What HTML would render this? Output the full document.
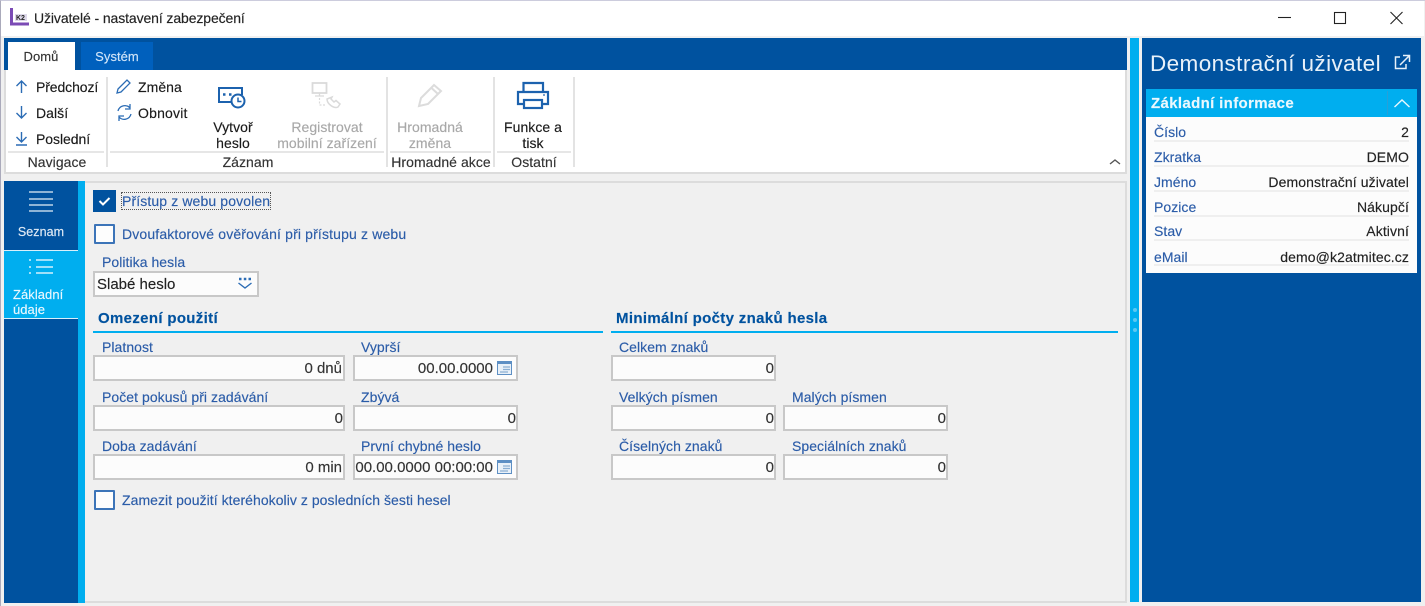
<!DOCTYPE html>
<html lang="cs"><head><meta charset="utf-8"><title>Uživatelé - nastavení zabezpečení</title>
<style>
html,body{margin:0;padding:0}
body{width:1425px;height:606px;overflow:hidden;position:relative;background:#f0f0f0;font-family:"Liberation Sans",sans-serif;font-size:14px;color:#1a1a1a;filter:blur(.3px)}
div,svg{position:absolute;box-sizing:border-box}
.t{white-space:nowrap;line-height:16px;letter-spacing:.05px;-webkit-text-stroke:.15px}
.c{text-align:center;transform:translateX(-50%)}
.l{color:#2b5ca8}
.g{color:#a8a8a8}
.i{background:#fcfcfc;border:2px solid #c8c8c8;height:26px;text-align:right;padding-right:0;font-size:15px;line-height:24px;white-space:nowrap;color:#333;-webkit-text-stroke:.15px}
.h{font-weight:bold;color:#00529f;letter-spacing:.33px;font-size:15px}
.r{left:1154px;width:255px;height:2px;background:#efefef}
.v{right:16px;color:#222;letter-spacing:.1px}
.sep{width:2px;background:#e3e3e3}
.cb{width:21px;height:20px;border:2px solid #3c74b8;background:#fdfdfd;border-radius:1px}
</style></head><body>
<div style="left:0;top:0;width:1425px;height:606px;background:#f0f0f0;border-left:1px solid #aab;border-top:1px solid #ccd"></div>
<div style="left:1px;top:1px;width:1423px;height:35px;background:#fff"></div>
<svg style="left:9px;top:7px" width="21" height="20" viewBox="0 0 21 20"><path d="M2.500 1V17H20" fill="none" stroke="#7b4bb5" stroke-width="3"/><rect x="6" y="7" width="12" height="7" fill="#ded9ea"/><text x="7" y="13" font-family="Liberation Sans" font-size="7" font-weight="bold" fill="#222">K2</text></svg>
<div class="t" style="left:34px;top:10px;color:#222;letter-spacing:-.1px">Uživatelé - nastavení zabezpečení</div>
<svg style="left:1270px;top:5px" width="145" height="26" viewBox="0 0 145 26" fill="none" stroke="#222" stroke-width="1.100"><path d="M8 12.500H21"/><rect x="64.500" y="7.500" width="11" height="11"/><path d="M120.500 7L132.500 19M132.500 7L120.500 19"/></svg>

<div style="left:4px;top:38px;width:1123px;height:32px;background:#00529f"></div>
<div style="left:8px;top:42px;width:67px;height:28px;background:#fff"></div>
<div style="left:81px;top:42px;width:72px;height:28px;background:#0060bd"></div>
<div class="t c" style="left:41px;top:49px;font-size:13px;color:#333">Domů</div>
<div class="t c" style="left:117px;top:49px;font-size:13px;color:#cfe4f8">Systém</div>
<div style="left:4px;top:70px;width:1123px;height:104px;background:#fff;border:solid #dcdcdc;border-width:0 2px 2px 2px"></div>

<svg style="left:14px;top:78px" width="18" height="72" viewBox="0 0 18 72" fill="none" stroke="#2b6cb5" stroke-width="1.400"><path d="M7.500 15V3M2.500 8L7.500 3L12.500 8"/><path d="M7.500 28V40M2.500 35L7.500 40L12.500 35"/><path d="M7.500 54V64M2.500 59L7.500 64L12.500 59M2 67H13"/></svg>
<div class="t" style="left:36px;top:79px;letter-spacing:-.1px">Předchozí</div>
<div class="t" style="left:36px;top:105px">Další</div>
<div class="t" style="left:36px;top:131px;letter-spacing:-.05px">Poslední</div>
<div class="sep" style="left:106px;top:77px;height:90px"></div>
<svg style="left:115px;top:78px" width="20" height="44" viewBox="0 0 20 44" fill="none" stroke="#2b6cb5" stroke-width="1.300"><path d="M2 15L3 11L12 2L15 5L6 14Z"/><path d="M3 33A7 7 0 0 1 15 30M15 26V31H10M16 36A7 7 0 0 1 4 39M4 43V38H9"/></svg>
<div class="t" style="left:138px;top:79px">Změna</div>
<div class="t" style="left:138px;top:105px;letter-spacing:.2px">Obnovit</div>
<svg style="left:217px;top:84px" width="30" height="26" viewBox="0 0 30 26" fill="none" stroke="#1c62ae" stroke-width="2"><path d="M14 18H2V4H25V11"/><circle cx="21" cy="17" r="6.500" fill="#fff"/><path d="M21 13.500V17.500H24.500" stroke-width="1.500"/><path d="M6 10.500h2.500M12 10.500h2.500" stroke-width="2.500"/></svg>
<div class="t c" style="left:233px;top:119px">Vytvoř</div>
<div class="t c" style="left:233px;top:135px">heslo</div>
<svg style="left:311px;top:81px" width="32" height="29" viewBox="0 0 32 29" fill="none" stroke="#dadada" stroke-width="1.800"><rect x="1.500" y="2" width="14" height="10"/><path d="M8.500 12V15M4 15H13" stroke-width="1.300"/><path d="M8.500 17V24H15" stroke-width="1.200" stroke-dasharray="2 1.500"/><path d="M16 18C16 23 23 28 27 26L29 23L25 19.500L23 21L20 18L21 16Z" stroke-width="1.500"/></svg>
<div class="t c g" style="left:327px;top:119px">Registrovat</div>
<div class="t c g" style="left:327px;top:135px">mobilní zařízení</div>
<div class="sep" style="left:386px;top:77px;height:90px"></div>
<svg style="left:417px;top:83px" width="26" height="26" viewBox="0 0 26 26" fill="none" stroke="#dcdcdc" stroke-width="2"><path d="M2 23L4 15L17 2L24 8L11 21Z"/><path d="M14.500 5L21 11"/></svg>
<div class="t c g" style="left:430px;top:119px">Hromadná</div>
<div class="t c g" style="left:430px;top:135px">změna</div>
<div class="sep" style="left:493px;top:77px;height:90px"></div>
<svg style="left:516px;top:81px" width="34" height="29" viewBox="0 0 34 29" fill="none" stroke="#1c62ae" stroke-width="2.200"><path d="M7.500 11V2H27V11"/><path d="M8 23H2V11H32V23H26"/><rect x="8" y="19" width="18" height="8"/><path d="M27 14h2" stroke-width="1.200"/></svg>
<div class="t c" style="left:533px;top:119px">Funkce a</div>
<div class="t c" style="left:533px;top:135px">tisk</div>
<div class="sep" style="left:573px;top:77px;height:90px"></div>
<div style="left:8px;top:151px;width:96px;height:2px;background:#e6e6e6"></div>
<div style="left:110px;top:151px;width:274px;height:2px;background:#e6e6e6"></div>
<div style="left:390px;top:151px;width:101px;height:2px;background:#e6e6e6"></div>
<div style="left:497px;top:151px;width:74px;height:2px;background:#e6e6e6"></div>
<div class="t c" style="left:57px;top:154px;color:#333">Navigace</div>
<div class="t c" style="left:248px;top:154px;color:#333">Záznam</div>
<div class="t c" style="left:441px;top:154px;color:#333">Hromadné akce</div>
<div class="t c" style="left:534px;top:154px;color:#333">Ostatní</div>
<svg style="left:1108px;top:157px" width="14" height="10" viewBox="0 0 14 10" fill="none" stroke="#555" stroke-width="1.400"><path d="M2 7L7 3L12 7"/></svg>

<div style="left:4px;top:181px;width:74px;height:422px;background:#00529f"></div>
<div style="left:4px;top:250px;width:74px;height:69px;background:#00aeef;border-top:1px solid #d8f0fb;border-bottom:1px solid #d8f0fb"></div>
<div style="left:78px;top:181px;width:7px;height:422px;background:#00aeef"></div>
<svg style="left:28px;top:190px" width="26" height="22" viewBox="0 0 26 22" stroke="#e4eef8" stroke-width="1.300"><path d="M1 2H25M1 9H25M1 15H25M1 21H25"/></svg>
<div class="t c" style="left:41px;top:224px;color:#dfeaf5;font-size:12.500px">Seznam</div>
<svg style="left:28px;top:258px" width="26" height="18" viewBox="0 0 26 18" stroke="#fff" stroke-width="1.300"><path d="M1 2H3M8 2H25M1 9H3M8 9H25M1 15H3M8 15H25"/></svg>
<div class="t" style="left:13px;top:287px;color:#e8f7fe;font-size:13px">Základní</div>
<div class="t" style="left:13px;top:302px;color:#e8f7fe;font-size:13px">údaje</div>

<div style="left:85px;top:181px;width:1042px;height:422px;background:#f0f0f0;border:solid #dcdcdc;border-width:2px 2px 2px 0"></div>

<div style="left:93px;top:190px;width:23px;height:22px;background:#00529f"></div>
<svg style="left:93px;top:190px" width="23" height="22" viewBox="0 0 23 22" fill="none" stroke="#fff" stroke-width="2"><path d="M6.500 11L10 14.500L16.500 8"/></svg>
<div class="t l" style="left:122px;top:193px;border:1px dotted #555;margin:-1px;letter-spacing:.12px">Přístup z webu povolen</div>
<div class="cb" style="left:94px;top:224px"></div>
<div class="t l" style="left:122px;top:226px;letter-spacing:.15px">Dvoufaktorové ověřování při přístupu z webu</div>
<div class="t l" style="left:102px;top:254px">Politika hesla</div>
<div class="i" style="left:93px;top:271px;width:166px;text-align:left;padding-left:2px;color:#222">Slabé heslo</div>
<svg style="left:237px;top:277px" width="16" height="13" viewBox="0 0 16 13" fill="none" stroke="#2b6cb5" stroke-width="1.400"><path d="M1.500 6L8 11L14.500 6"/><path d="M2 2h2.500M6.800 2h2.500M11.500 2h2.500" stroke-width="2.400"/></svg>

<div class="t h" style="left:98px;top:311px">Omezení použití</div>
<div class="t h" style="left:616px;top:311px">Minimální počty znaků hesla</div>
<div style="left:93px;top:331px;width:510px;height:2px;background:#00aeef"></div>
<div style="left:611px;top:331px;width:507px;height:2px;background:#00aeef"></div>

<div class="t l" style="left:102px;top:339px">Platnost</div>
<div class="t l" style="left:361px;top:339px">Vyprší</div>
<div class="t l" style="left:619px;top:339px">Celkem znaků</div>
<div class="i" style="left:93px;top:355px;width:252px;padding-right:1px">0 dnů</div>
<div class="i" style="left:353px;top:355px;width:165px;padding-right:23px">00.00.0000</div>
<div class="i" style="left:611px;top:355px;width:165px">0</div>

<div class="t l" style="left:102px;top:389px">Počet pokusů při zadávání</div>
<div class="t l" style="left:361px;top:389px">Zbývá</div>
<div class="t l" style="left:619px;top:389px">Velkých písmen</div>
<div class="t l" style="left:792px;top:389px">Malých písmen</div>
<div class="i" style="left:93px;top:405px;width:252px">0</div>
<div class="i" style="left:353px;top:405px;width:165px">0</div>
<div class="i" style="left:611px;top:405px;width:165px">0</div>
<div class="i" style="left:783px;top:405px;width:165px">0</div>

<div class="t l" style="left:102px;top:438px">Doba zadávání</div>
<div class="t l" style="left:361px;top:438px">První chybné heslo</div>
<div class="t l" style="left:619px;top:438px">Číselných znaků</div>
<div class="t l" style="left:792px;top:438px">Speciálních znaků</div>
<div class="i" style="left:93px;top:454px;width:252px;padding-right:1px">0 min</div>
<div class="i" style="left:353px;top:454px;width:165px;padding-right:23px">00.00.0000 00:00:00</div>
<div class="i" style="left:611px;top:454px;width:165px">0</div>
<div class="i" style="left:783px;top:454px;width:165px">0</div>

<svg style="left:497px;top:360px" width="16" height="16" viewBox="0 0 16 16"><rect x=".5" y="1.500" width="14" height="13" fill="#e8f0f8" stroke="#5d8fc4"/><rect x="1" y="1" width="13" height="3" fill="#5d8fc4"/><path d="M6 7h7M6 9.500h7M3 12h8" stroke="#8aaed2" stroke-width="1.200"/></svg>
<svg style="left:497px;top:459px" width="16" height="16" viewBox="0 0 16 16"><rect x=".5" y="1.500" width="14" height="13" fill="#e8f0f8" stroke="#5d8fc4"/><rect x="1" y="1" width="13" height="3" fill="#5d8fc4"/><path d="M6 7h7M6 9.500h7M3 12h8" stroke="#8aaed2" stroke-width="1.200"/></svg>

<div class="cb" style="left:94px;top:490px"></div>
<div class="t l" style="left:122px;top:492px">Zamezit použití kteréhokoliv z posledních šesti hesel</div>

<div style="left:1130px;top:38px;width:9px;height:564px;background:#00aeef"></div>
<div style="left:1133px;top:308px;width:4px;height:4px;border-radius:50%;background:#5cc8f2"></div>
<div style="left:1133px;top:318px;width:4px;height:4px;border-radius:50%;background:#5cc8f2"></div>
<div style="left:1133px;top:328px;width:4px;height:4px;border-radius:50%;background:#5cc8f2"></div>

<div style="left:1142px;top:38px;width:279px;height:564px;background:#00529f"></div>
<div class="t" style="left:1150px;top:51px;font-size:22.500px;line-height:26px;color:#e8f1f9;letter-spacing:.4px;-webkit-text-stroke:0">Demonstrační uživatel</div>
<svg style="left:1394px;top:54px" width="17" height="17" viewBox="0 0 17 17" fill="none" stroke="#e8f1f9" stroke-width="1.500"><path d="M6 3H1.500V14.500H12V10"/><path d="M9 1.500H15.500V8M15 2L6 11"/></svg>
<div style="left:1146px;top:89px;width:271px;height:28px;background:#00aeef"></div>
<div class="t" style="left:1151px;top:96px;font-weight:bold;font-size:15px;color:#eaf8fe;letter-spacing:.35px">Základní informace</div>
<div style="left:1387px;top:91px;width:1px;height:24px;background:#27a0d8"></div>
<svg style="left:1393px;top:97px" width="18" height="12" viewBox="0 0 18 12" fill="none" stroke="#e8f8fe" stroke-width="1.400"><path d="M1.500 10L9 3L16.500 10"/></svg>
<div style="left:1146px;top:117px;width:271px;height:156px;background:#fcfcfc"></div>
<div class="r" style="top:140px"></div><div class="r" style="top:165px"></div><div class="r" style="top:190px"></div><div class="r" style="top:215px"></div><div class="r" style="top:239px"></div><div class="r" style="top:264px"></div>
<div class="t l" style="left:1154px;top:124px">Číslo</div><div class="t v" style="top:124px">2</div>
<div class="t l" style="left:1154px;top:149px">Zkratka</div><div class="t v" style="top:149px">DEMO</div>
<div class="t l" style="left:1154px;top:174px">Jméno</div><div class="t v" style="top:174px">Demonstrační uživatel</div>
<div class="t l" style="left:1154px;top:199px">Pozice</div><div class="t v" style="top:199px">Nákupčí</div>
<div class="t l" style="left:1154px;top:223px">Stav</div><div class="t v" style="top:223px">Aktivní</div>
<div class="t l" style="left:1154px;top:249px">eMail</div><div class="t v" style="top:249px">demo@k2atmitec.cz</div>
</body></html>
